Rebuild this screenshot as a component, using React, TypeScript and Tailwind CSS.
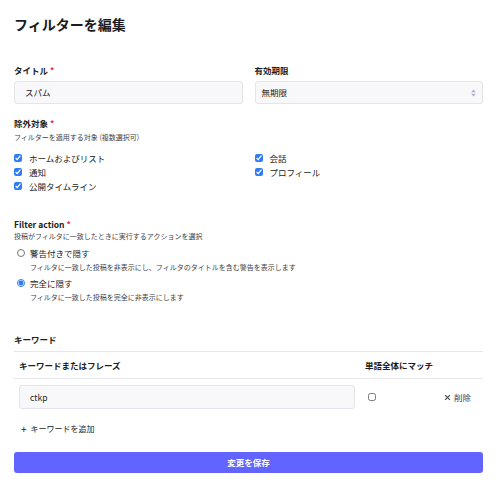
import { useState } from "react"

const font = { fontFamily: '"Noto Sans CJK JP", "Noto Sans", sans-serif' }

function Label({ children, required }: { children: React.ReactNode; required?: boolean }) {
  return (
    <div className="text-[8.5px] font-bold leading-[12px] text-[#1c1c22]">
      {children}
      {required && <span className="ml-[2px] text-[#e11d48]">*</span>}
    </div>
  )
}

function Hint({ children }: { children: React.ReactNode }) {
  return <div className="text-[7px] leading-[10px] text-[#3f3f46]">{children}</div>
}

function Check({ label, checked }: { label: string; checked: boolean }) {
  return (
    <label className="flex h-[14px] items-center gap-[7px] text-[8.5px] text-[#1c1c22]">
      <input
        type="checkbox"
        defaultChecked={checked}
        className="m-0 h-[8px] w-[8px] accent-[#2f7cf6]"
      />
      {label}
    </label>
  )
}

function Radio({ label, desc, checked }: { label: string; desc: string; checked: boolean }) {
  return (
    <div>
      <label className="flex h-[14px] items-center gap-[5px] text-[8.5px] text-[#1c1c22]">
        <input
          type="radio"
          name="action"
          defaultChecked={checked}
          className="m-0 ml-[3px] h-[8px] w-[8px] accent-[#2f7cf6]"
        />
        {label}
      </label>
      <div className="mt-[2px] pl-[16px]">
        <Hint>{desc}</Hint>
      </div>
    </div>
  )
}

export default function App() {
  const [keywords] = useState(["ctkp"])

  return (
    <div className="min-h-[488px] bg-white pl-[14px] pr-[17px] pt-[14px]" style={font}>
      <h1 className="text-[14px] font-bold leading-[20px] text-[#1c1c22]">フィルターを編集</h1>

      <div className="mt-[30px] grid grid-cols-2 gap-[12px]">
        <div>
          <Label required>タイトル</Label>
          <div className="mt-[5px] flex h-[23px] items-center rounded-[3px] border border-[#e4e4ea] bg-[#f8f8fa] pl-[10px] text-[8.5px] text-[#1c1c22]">
            スパム
          </div>
        </div>
        <div>
          <Label>有効期限</Label>
          <div className="mt-[5px] flex h-[23px] items-center justify-between rounded-[3px] border border-[#e4e4ea] bg-[#f8f8fa] pl-[6px] pr-[6px] text-[8.5px] text-[#1c1c22]">
            <span>無期限</span>
            <svg width="5" height="8" viewBox="0 0 5 8" fill="#b3b1cf">
              <path d="M2.5 0.5 L4.8 3.2 H0.2 Z" />
              <path d="M2.5 7.5 L4.8 4.8 H0.2 Z" />
            </svg>
          </div>
        </div>
      </div>

      <div className="mt-[13px]">
        <Label required>除外対象</Label>
        <div className="mt-[3px]">
          <Hint>フィルターを適用する対象 (複数選択可)</Hint>
        </div>
        <div className="mt-[9px] grid grid-cols-2 gap-x-[12px]">
          <div className="flex flex-col">
            <Check label="ホームおよびリスト" checked />
            <Check label="通知" checked />
            <Check label="公開タイムライン" checked />
          </div>
          <div className="flex flex-col">
            <Check label="会話" checked />
            <Check label="プロフィール" checked />
          </div>
        </div>
      </div>

      <div className="mt-[25px]">
        <Label required>Filter action</Label>
        <div className="mt-[1px]">
          <Hint>投稿がフィルタに一致したときに実行するアクションを選択</Hint>
        </div>
        <div className="mt-[5px] flex flex-col gap-[4px]">
          <Radio
            label="警告付きで隠す"
            desc="フィルタに一致した投稿を非表示にし、フィルタのタイトルを含む警告を表示します"
            checked={false}
          />
          <Radio label="完全に隠す" desc="フィルタに一致した投稿を完全に非表示にします" checked />
        </div>
      </div>

      <div className="mt-[31px]">
        <div className="border-b border-[#e6e6ee] pb-[6px]">
          <Label>キーワード</Label>
        </div>
        <div className="grid grid-cols-[346px_1fr_auto]">
          <div className="flex h-[27px] items-center border-b border-[#e6e6ee] px-[5px] text-[8.5px] font-bold text-[#1c1c22]">
            キーワードまたはフレーズ
          </div>
          <div className="flex h-[27px] items-center border-b border-[#e6e6ee] px-[5px] text-[8.5px] font-bold text-[#1c1c22]">
            単語全体にマッチ
          </div>
          <div className="border-b border-[#e6e6ee]" />
          {keywords.map((k) => (
            <div key={k} className="contents">
              <div className="px-[5px] pt-[6px]">
                <div className="flex h-[24px] items-center rounded-[3px] border border-[#e4e4ea] bg-[#f8f8fa] pl-[10px] text-[8.5px] text-[#1c1c22]">
                  {k}
                </div>
              </div>
              <div className="flex items-center px-[5px] pt-[6px]">
                <input type="checkbox" className="m-0 ml-[3px] h-[8px] w-[8px]" />
              </div>
              <div className="flex items-center gap-[3px] pl-[5px] pr-[12px] pt-[6px] text-[8.5px] text-[#3f3f46]">
                <svg width="7" height="7" viewBox="0 0 10 10" stroke="#3f3f46" strokeWidth="1.5">
                  <path d="M1.5 1.5 L8.5 8.5 M8.5 1.5 L1.5 8.5" />
                </svg>
                削除
              </div>
            </div>
          ))}
        </div>
        <button
          type="button"
          className="mt-[14px] flex h-[12px] items-center gap-[4px] pl-[7px] text-[8px] text-[#1c1c22]"
        >
          <span className="text-[10px] leading-none">+</span>
          キーワードを追加
        </button>
      </div>

      <button
        type="button"
        className="mt-[17px] flex h-[21px] w-full items-center justify-center rounded-[3px] bg-[#6364ff] text-[8.5px] font-bold text-white"
      >
        変更を保存
      </button>
    </div>
  )
}
